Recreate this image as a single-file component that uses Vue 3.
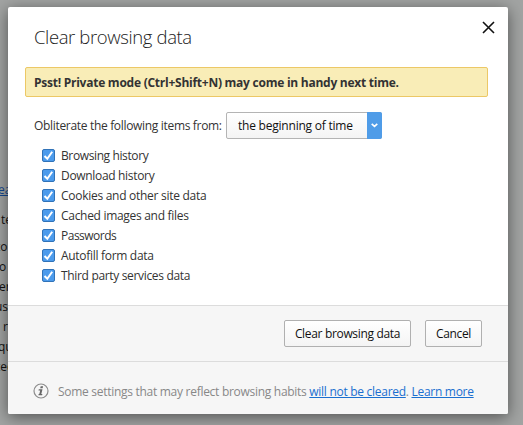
<template>
  <div class="page">
    <div class="behind">
      <p v-for="(line, i) in lines" :key="i" :class="{ link: line.link, gap: line.gap }"><span :style="{ marginLeft: line.x + 'px' }">{{ line.text }}</span></p>
    </div>

    <div class="dialog">
      <div class="body">
        <div class="head">
          <h1>Clear browsing data</h1>
          <svg class="close" width="13" height="13" viewBox="0 0 13 13" @click="close">
            <path d="M1 1L12 12M12 1L1 12" stroke="#111" stroke-width="1.6" fill="none" />
          </svg>
        </div>
        <div class="banner"><span>Psst! Private mode (Ctrl+Shift+N) may come in handy next time.</span></div>
        <div class="period">
          <span class="label">Obliterate the following items from:</span>
          <div class="select">
            <span class="value">the beginning of time</span>
            <span class="arrow">
              <svg width="7" height="5" viewBox="0 0 7 5"><path d="M0.7 0.8L3.5 3.4L6.3 0.8" stroke="#fff" stroke-width="1.6" fill="none" /></svg>
            </span>
          </div>
        </div>
        <ul>
          <li v-for="item in items" :key="item.text" @click="item.checked = !item.checked">
            <span class="box">
              <svg v-if="item.checked" width="11" height="11" viewBox="0 0 11 11"><path d="M1.5 6L4.3 8.8L9.2 1.7" stroke="#fff" stroke-width="2" fill="none" /></svg>
            </span>
            <span :style="{ letterSpacing: item.spacing + 'px' }">{{ item.text }}</span>
          </li>
        </ul>
      </div>

      <div class="actions">
        <button class="clear">Clear browsing data</button>
        <button class="cancel" @click="close">Cancel</button>
      </div>

      <div class="note">
        <svg width="16" height="16" viewBox="0 0 16 16">
          <circle cx="8" cy="8" r="7" fill="none" stroke="#8c8c8c" stroke-width="1.2" />
          <path d="M7.7 3.2h2.4l-.5 2.1H7.2zM5.8 6.2h3.7l-1.2 4.8h1.1l-.3 1.3H5.4l.3-1.3h.6l.9-3.6H5.5z" fill="#666" />
        </svg>
        <p>Some settings that may reflect browsing habits <a href="#" @click.prevent>will not be cleared</a>. <a href="#" @click.prevent>Learn more</a></p>
      </div>
    </div>
  </div>
</template>

<script setup>
import { ref } from 'vue'

const close = () => {}

const items = ref([
  { text: 'Browsing history', checked: true, spacing: -0.38 },
  { text: 'Download history', checked: true, spacing: -0.32 },
  { text: 'Cookies and other site data', checked: true, spacing: -0.28 },
  { text: 'Cached images and files', checked: true, spacing: -0.3 },
  { text: 'Passwords', checked: true, spacing: -0.5 },
  { text: 'Autofill form data', checked: true, spacing: -0.3 },
  { text: 'Third party services data', checked: true, spacing: -0.33 }
])

const lines = [
  { text: 'ea', x: -2, link: true },
  { text: 'te', x: 1, gap: true },
  { text: 'to', x: -4, gap: true },
  { text: 'o', x: -1 },
  { text: 'er', x: -1 },
  { text: 'us', x: -5 },
  { text: 'r', x: 3 },
  { text: 'qu', x: -2 },
  { text: 'tec', x: -4 }
]
</script>

<style>
body {
  margin: 0;
  overflow: hidden;
}
</style>

<style scoped>
.page {
  position: relative;
  display: flex;
  width: 523px;
  height: 425px;
  background: #a2a4a3;
  font-family: "Open Sans", "Noto Sans", sans-serif;
  font-size: 12px;
  color: #333;
  overflow: hidden;
}

.behind {
  width: 8px;
  padding-top: 180px;
  color: #111;
  white-space: nowrap;
}

.behind p {
  margin: 0;
  height: 20px;
  line-height: 20px;
  display: flex;
}

.behind .gap { margin-top: 10px; }
.behind .gap + .gap { margin-top: 7px; }
.behind .link { color: #14478f; text-decoration: underline; }

.dialog {
  position: relative;
  margin-top: 7px;
  width: 500px;
  height: 407px;
  display: flex;
  flex-direction: column;
  background: #fff;
  border-radius: 2px;
  box-shadow: 0 3px 16px rgba(0, 0, 0, 0.5);
}

.body {
  height: 298px;
}

.head {
  display: flex;
  justify-content: space-between;
  height: 60px;
  padding: 0 13px 0 26px;
}

h1 {
  margin: 0;
  padding-top: 16px;
  font-size: 18.5px;
  line-height: 28px;
  font-weight: 300;
  letter-spacing: -0.38px;
  color: #222;
  white-space: nowrap;
}

.close { margin-top: 14px; }

.banner {
  box-sizing: border-box;
  width: 463px;
  height: 30px;
  margin-left: 17px;
  padding-left: 8px;
  line-height: 29px;
  border: 1px solid #ecc866;
  border-radius: 2px;
  background: #f9edb7;
  font-weight: 700;
  letter-spacing: -0.25px;
  white-space: nowrap;
}

.period {
  display: flex;
  align-items: center;
  margin: 15px 0 0 26px;
  height: 27px;
}

.label {
  width: 192px;
  letter-spacing: -0.32px;
  white-space: nowrap;
}

.select {
  box-sizing: border-box;
  display: flex;
  width: 156px;
  height: 27px;
  border: 1px solid #b4b4b4;
  border-radius: 2px;
  background: linear-gradient(#fff, #f4f4f4);
  color: #111;
}

.value {
  flex: 1;
  padding-left: 11px;
  line-height: 25px;
  letter-spacing: -0.22px;
  white-space: nowrap;
}

.arrow {
  display: flex;
  align-items: center;
  justify-content: center;
  width: 15px;
  margin: -1px -1px -1px 0;
  border-radius: 0 2px 2px 0;
  background: #4f9ce8;
}

ul {
  margin: 7px 0 0 34px;
  padding: 0;
  list-style: none;
}

li {
  display: flex;
  align-items: center;
  height: 20px;
  line-height: 20px;
  white-space: nowrap;
}

.box {
  box-sizing: border-box;
  width: 13px;
  height: 13px;
  margin: -1px 6px 0 0;
  display: flex;
  border: 1px solid #3173b8;
  border-radius: 2px;
  background: #4c9bec;
}

.actions {
  box-sizing: border-box;
  display: flex;
  justify-content: flex-end;
  gap: 14px;
  height: 56px;
  padding: 14px 26px 0 0;
  border-top: 1px solid #dcdcdc;
  background: #f6f6f6;
}

button {
  box-sizing: border-box;
  height: 27px;
  padding: 0;
  border: 1px solid #b0b0b0;
  border-radius: 2px;
  background: linear-gradient(#fff, #f4f4f4);
  color: #111;
  font: inherit;
  letter-spacing: -0.33px;
}

.clear { width: 127px; }
.cancel { width: 57px; }

.note {
  box-sizing: border-box;
  display: flex;
  align-items: center;
  height: 53px;
  padding: 6px 0 0 25px;
  border-top: 1px solid #dcdcdc;
  border-radius: 0 0 2px 2px;
  background: #f6f6f6;
}

.note p {
  margin: 0 0 0 9px;
  color: #888;
  letter-spacing: -0.285px;
  white-space: nowrap;
}

a { color: #1a6fd0; }
</style>
